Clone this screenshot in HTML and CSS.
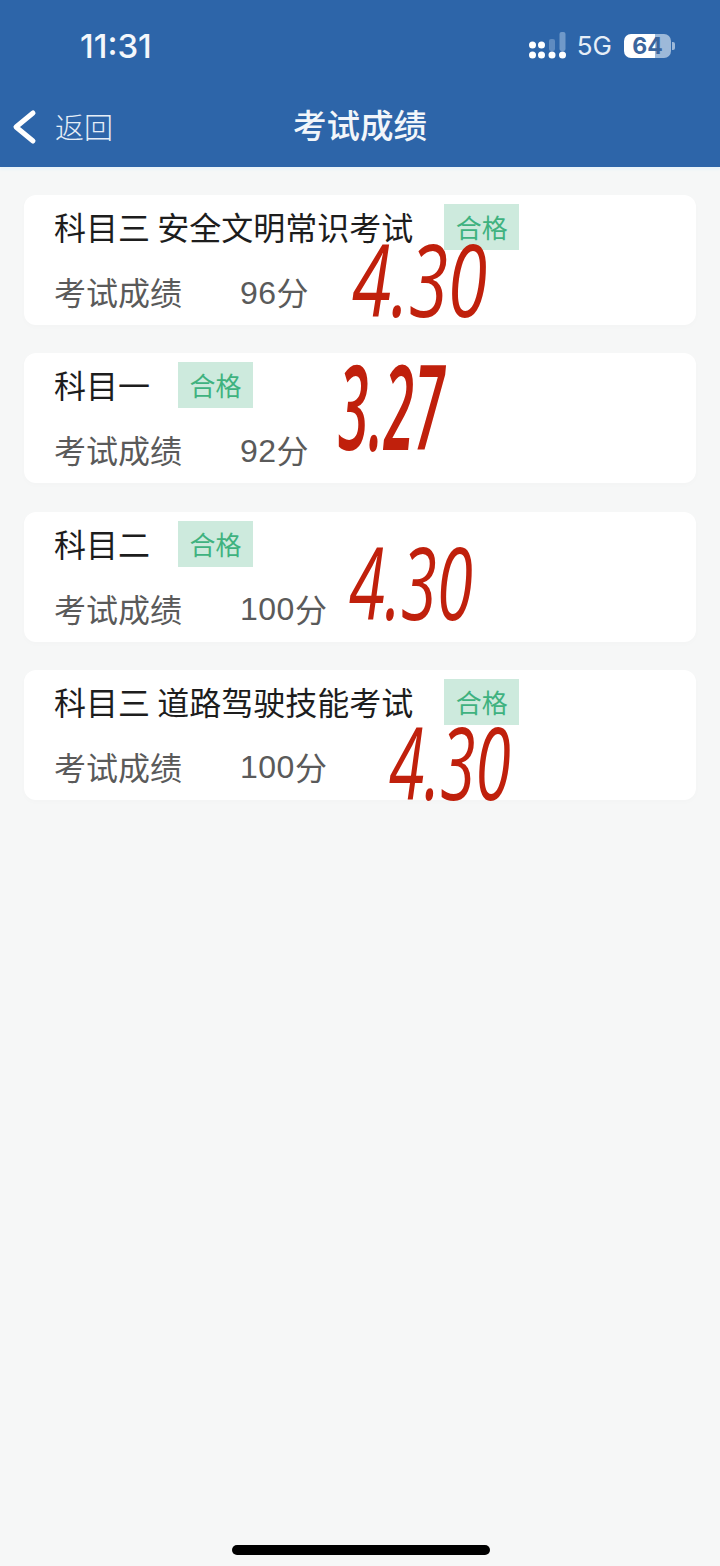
FILE: index.html
```html
<!DOCTYPE html>
<html lang="zh-CN">
<head>
<meta charset="utf-8">
<title>考试成绩</title>
<link rel="stylesheet" href="styles.css">
</head>
<body>
<div class="page">
  <header class="header">
    <div class="status">
      <span class="time">11:31</span>
      <div class="status-right">
        <svg class="signal" width="37" height="28" viewBox="0 0 37 28" aria-hidden="true">
          <g fill="#fff">
            <circle cx="3.500" cy="14" r="3.500"/><circle cx="12.500" cy="14" r="3.500"/>
            <circle cx="3.500" cy="24" r="3.500"/><circle cx="12.500" cy="24" r="3.500"/><circle cx="23" cy="24" r="3.500"/><circle cx="33.500" cy="24" r="3.500"/>
          </g>
          <rect x="20" y="8" width="6" height="12" rx="2" fill="#5f8bc0"/>
          <rect x="30.500" y="1" width="6" height="19" rx="2" fill="#7099c9"/>
        </svg>
        <span class="net">5G</span>
        <div class="battery"><span class="battery-num">64</span></div>
        <span class="battery-tip"></span>
      </div>
    </div>
    <nav class="nav">
      <div class="back">
        <svg width="26" height="40" viewBox="0 0 26 40" aria-hidden="true"><path d="M21 6 L4 20 L21 34" fill="none" stroke="#fff" stroke-width="5" stroke-linecap="round" stroke-linejoin="round"/></svg>
        <span class="back-text">返回</span>
      </div>
      <h1 class="title">考试成绩</h1>
    </nav>
  </header>
  <main class="list">
    <section class="card">
      <div class="row-head"><span class="subject subject-long">科目三 安全文明常识考试</span><span class="tag">合格</span></div>
      <div class="row-score"><span class="label">考试成绩</span><span class="score">96</span><span class="unit">分</span></div>
      <span class="ink ink-a">4.30</span>
    </section>
    <section class="card">
      <div class="row-head"><span class="subject">科目一</span><span class="tag">合格</span></div>
      <div class="row-score"><span class="label">考试成绩</span><span class="score">92</span><span class="unit">分</span></div>
      <span class="ink ink-b">3.27</span>
    </section>
    <section class="card">
      <div class="row-head"><span class="subject">科目二</span><span class="tag">合格</span></div>
      <div class="row-score"><span class="label">考试成绩</span><span class="score">100</span><span class="unit">分</span></div>
      <span class="ink ink-c">4.30</span>
    </section>
    <section class="card">
      <div class="row-head"><span class="subject subject-long">科目三 道路驾驶技能考试</span><span class="tag">合格</span></div>
      <div class="row-score"><span class="label">考试成绩</span><span class="score">100</span><span class="unit">分</span></div>
      <span class="ink ink-d">4.30</span>
    </section>
  </main>
  <div class="home-bar"><span class="home-indicator"></span></div>
</div>
</body>
</html>
```
FILE: styles.css
```css
* { box-sizing: border-box; }
html, body { margin: 0; padding: 0; }
body {
  background: #f6f7f7;
  font-family: "Noto Sans CJK SC", "Noto Sans", sans-serif;
}
.page {
  width: 720px;
  height: 1566px;
  display: flex;
  flex-direction: column;
  overflow: hidden;
}
.header {
  height: 167px;
  background: #2d65a9;
  color: #fff;
  padding-top: 26px;
  flex: none;
  box-shadow: 0 3px 2px #eaf4f9;
}
.status {
  height: 40px;
  display: flex;
  align-items: center;
  justify-content: space-between;
  padding: 0 45px 0 80px;
}
.time {
  font-family: Inter, "Liberation Sans", sans-serif;
  font-size: 33px;
  font-weight: 500;
  line-height: 40px;
  color: #f4f7fb;
}
.status-right { display: flex; align-items: center; }
.signal { margin: -2px 11px 0 0; }
.net {
  font-family: Inter, "Liberation Sans", sans-serif;
  font-size: 26px;
  line-height: 30px;
  color: #e6eef7;
  margin-right: 12px;
}
.battery {
  width: 47px;
  height: 24px;
  border-radius: 7px;
  background: linear-gradient(90deg, #fff 0 66%, #9db9d9 66% 100%);
  display: flex;
  align-items: center;
  justify-content: center;
}
.battery-num {
  font-family: Inter, "Liberation Sans", sans-serif;
  font-size: 23px;
  font-weight: 700;
  line-height: 24px;
  color: #3a659d;
}
.battery-tip {
  width: 3px;
  height: 8px;
  margin-left: 1px;
  border-radius: 0 2px 2px 0;
  background: #9db9d9;
}
.nav {
  position: relative;
  height: 80px;
  margin-top: 20px;
  display: flex;
  align-items: center;
  justify-content: center;
}
.back {
  position: absolute;
  left: 12px;
  top: 20px;
  display: flex;
  align-items: center;
  gap: 17px;
}
.back-text {
  padding-bottom: 2px;
  font-size: 29px;
  line-height: 40px;
  color: #e6eef7;
  font-weight: 300;
}
.title {
  margin: 0;
  padding-bottom: 4px;
  font-size: 33.500px;
  font-weight: 500;
  line-height: 40px;
  color: #f2f6fa;
}
.list {
  display: flex;
  flex-direction: column;
  gap: 28.300px;
  padding: 28px 24px 0;
}
.card {
  position: relative;
  height: 130px;
  padding: 9px 30px 0;
  background: #fff;
  border-radius: 12px;
  box-shadow: 0 2px 6px rgba(0, 0, 0, 0.015);
}
.row-head { display: flex; align-items: center; height: 46px; }
.subject {
  padding-bottom: 2px;
  font-size: 32px;
  line-height: 44px;
  color: #1d1d1d;
  white-space: pre;
}
.subject-long { margin-right: 3px; }
.tag {
  width: 75px;
  height: 46px;
  margin-left: 28px;
  background: #cdeadd;
  color: #3fb27f;
  font-size: 26px;
  line-height: 46px;
  text-align: center;
}
.row-score {
  display: flex;
  align-items: center;
  height: 40px;
  margin-top: 21px;
  font-size: 32px;
  color: #5a5a5a;
}
.label { width: 186px; }
.score {
  padding-top: 4px;
  font-family: "Liberation Sans", sans-serif;
  letter-spacing: 0.500px;
}
.ink {
  position: absolute;
  font-family: "Open Sans", sans-serif;
  font-style: italic;
  font-weight: 500;
  font-size: 100px;
  color: #c0200c;
  line-height: 1;
  transform-origin: left top;
  white-space: nowrap;
}
.ink-a { left: 328px; top: 33px; transform: scaleX(0.71); }
.ink-b { left: 314px; top: -7px; font-size: 118px; font-weight: 600; transform: scaleX(0.47); }
.ink-c { left: 325px; top: 19px; transform: scaleX(0.65); }
.ink-d { left: 365px; top: 41px; transform: scaleX(0.64); }
.home-bar {
  margin-top: auto;
  height: 21px;
  padding-left: 2px;
  display: flex;
  justify-content: center;
}
.home-indicator {
  width: 258px;
  height: 10px;
  border-radius: 5px;
  background: #000;
}
```
